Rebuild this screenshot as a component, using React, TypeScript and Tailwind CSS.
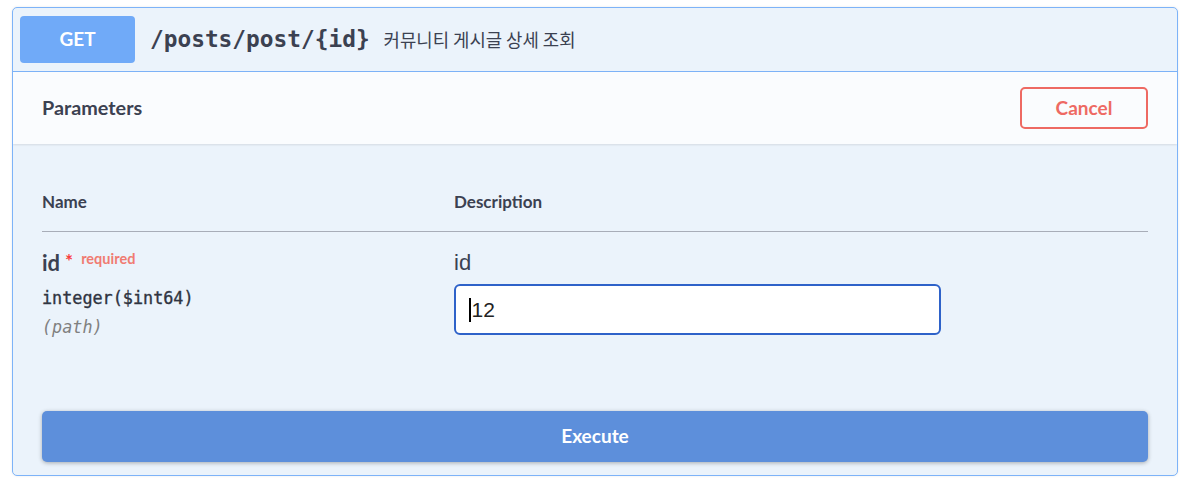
export default function App() {
  return (
    <div className="min-h-[486px] w-[1192px] bg-white pt-[7px] font-['Lato','Noto_Sans_CJK_KR',sans-serif] text-[#3b4151]">
      <div className="ml-[12px] w-[1166px] h-[469px] rounded-[5px] border border-[#7db3f8] bg-[#ebf3fb] shadow-[0_0_3px_rgba(0,0,0,0.08)] overflow-hidden">
        {/* summary */}
        <div className="flex h-[64px] items-center border-b border-[#7db3f8] pl-[7px]">
          <div className="flex h-[47px] w-[115px] items-center justify-center rounded-[4px] bg-[#70aaf8] text-[19px] font-bold text-white">
            GET
          </div>
          <span className="ml-[15px] font-['DejaVu_Sans_Mono',monospace] text-[22.8px] font-bold text-[#3b4151]">
            /posts/post/{'{id}'}
          </span>
          <span className="ml-[14px] font-['Noto_Sans_CJK_KR',sans-serif] text-[17.8px] text-[#3b4151]">
            커뮤니티 게시글 상세 조회
          </span>
        </div>

        {/* parameters header */}
        <div className="flex h-[72px] items-center justify-between bg-[#fafcfe] px-[29px] shadow-[0_1px_2px_rgba(0,0,0,0.1)]">
          <h4 className="text-[19.8px] font-bold">Parameters</h4>
          <button className="h-[42px] w-[128px] rounded-[5px] border-2 border-[#ee6a63] bg-transparent text-[19px] font-bold text-[#ee6a63]">
            Cancel
          </button>
        </div>

        {/* table */}
        <div className="px-[29px] pt-[46px]">
          <div className="flex border-b border-[#a8adb8] pb-[17px] text-[17px] font-bold leading-[24px]">
            <div className="w-[412px]">Name</div>
            <div>Description</div>
          </div>
          <div className="flex pt-[18px]">
            <div className="w-[412px]">
              <div className="flex items-start leading-[26px]">
                <span className="text-[22px] font-bold">id</span>
                <span className="ml-[5px] text-[19px] font-bold leading-[22px] text-[#f93e3e]">*</span>
                <span className="ml-[8px] text-[14.5px] font-bold leading-[18px] text-[#f07b72]">required</span>
              </div>
              <div className="mt-[11px] font-['DejaVu_Sans_Mono',monospace] text-[16.8px] leading-[22px] text-[#2f3441] [-webkit-text-stroke:0.35px_#2f3441]">
                integer($int64)
              </div>
              <div className="mt-[7px] font-['DejaVu_Sans_Mono',monospace] text-[16.8px] italic leading-[22px] text-[#808080]">
                (path)
              </div>
            </div>
            <div>
              <div className="font-['Liberation_Sans',sans-serif] text-[22px] leading-[26px] text-[#3b4151]">id</div>
              <div className="mt-[8px] flex h-[51px] w-[487px] items-center rounded-[6px] border-2 border-[#2e62c9] bg-white pl-[13px] font-['Liberation_Sans',sans-serif] text-[21px] text-[#222]">
                <span className="mr-[1px] inline-block h-[24px] w-[1.5px] bg-black" />
                12
              </div>
            </div>
          </div>
        </div>

        {/* execute */}
        <div className="px-[29px] pt-[73px]">
          <button className="h-[51px] w-full rounded-[5px] bg-[#5d8fdb] text-[19px] font-bold text-white shadow-[0_1px_4px_rgba(0,0,0,0.3)]">
            Execute
          </button>
        </div>
      </div>
    </div>
  );
}
